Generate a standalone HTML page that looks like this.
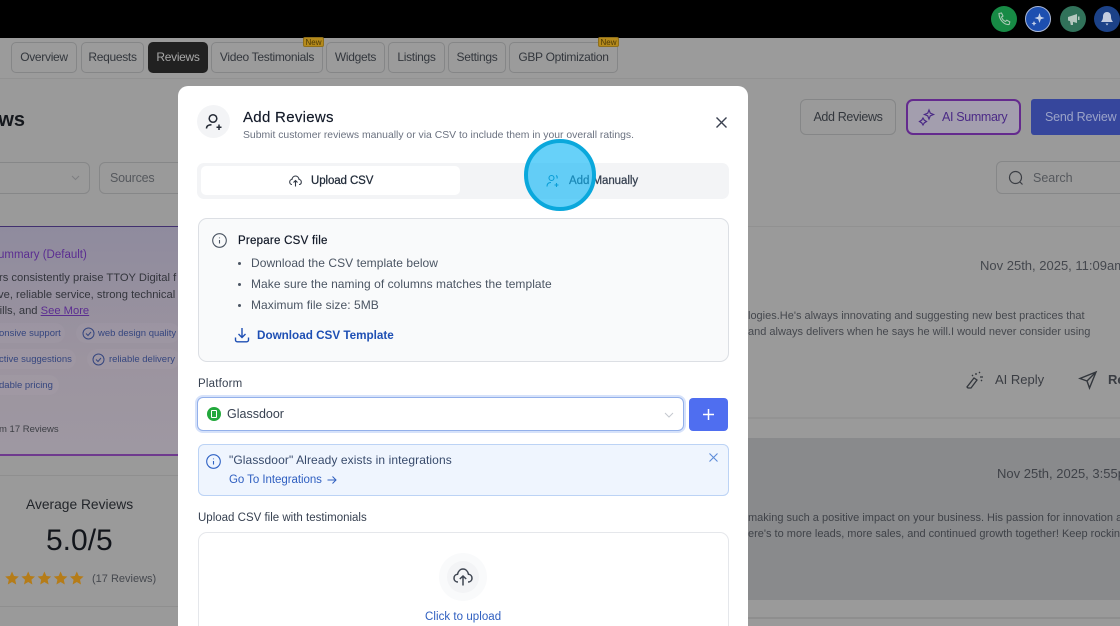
<!DOCTYPE html>
<html><head><meta charset="utf-8">
<style>
html,body{margin:0;padding:0;width:1120px;height:626px;overflow:hidden;background:#9a9a9a}
body{font-family:"Liberation Sans",sans-serif}
#p{position:absolute;left:0;top:0;width:1120px;height:626px;overflow:hidden;background:#9a9a9a;filter:blur(.35px)}
.a{position:absolute;white-space:nowrap;box-sizing:border-box}
.t{position:absolute;white-space:nowrap;line-height:18px}
.tab{position:absolute;top:42px;height:31px;border:1px solid #858687;border-radius:5px;font-size:12px;letter-spacing:-.3px;line-height:29px;text-align:center;color:#33373d;box-sizing:border-box}
.new{position:absolute;top:37px;height:10px;width:21px;background:#b58a1b;border:1px solid #8f6f1a;border-radius:2px;font-size:8px;line-height:9px;text-align:center;color:#4b3a08;box-sizing:border-box}
.chip{color:#35467f;font-size:9.5px}
.pill{position:absolute;height:20px;border-radius:10px;background:rgba(255,255,255,.03)}
.m{color:#4b5563;font-size:12px;letter-spacing:.05px}
svg{position:absolute;overflow:visible}
</style></head><body>
<div id="p">
<div class="a" style="left:0;top:0;width:1120px;height:38px;background:#000"></div>
<div class="a" style="left:0;top:38px;width:1120px;height:41px;background:#9b9b9b;border-bottom:1px solid #929292"></div>

<!-- top icons -->
<div class="a" style="left:991px;top:6px;width:26px;height:26px;border-radius:50%;background:#178a45"></div>
<svg style="left:998px;top:12px" width="13" height="14" viewBox="0 0 13 14" fill="none" stroke="#a9c9b5" stroke-width="1.1"><path d="M1 1.500l2.500-.5 1.500 3-1.500 1c.6 2 2 3.600 4 4.500l1.300-1.300 3 1.700-.7 2.600C6.500 13 1 8 1 1.500z"/></svg>
<div class="a" style="left:1025px;top:6px;width:26px;height:26px;border-radius:50%;background:#1d4fb0;border:1px solid #aab8d8"></div>
<svg style="left:1031px;top:12px" width="14" height="14" viewBox="0 0 14 14" fill="#c5d2ea"><path d="M8.500 1l1.300 3.700L13.500 6 9.800 7.300 8.500 11 7.200 7.300 3.500 6l3.700-1.300z"/><path d="M3 9l.8 1.700 1.700.8-1.700.8L3 14l-.8-1.700L.5 11.500l1.700-.8z"/></svg>
<div class="a" style="left:1060px;top:6px;width:26px;height:26px;border-radius:50%;background:#31725a"></div>
<svg style="left:1067px;top:13px" width="13" height="13" viewBox="0 0 13 13" fill="#b5c7bf"><path d="M1 4l9-3v9L1 7.500z"/><path d="M3 8h3v4H3.800z"/><rect x="11" y="3.500" width="1.500" height="3.500"/></svg>
<div class="a" style="left:1094px;top:6px;width:26px;height:26px;border-radius:50%;background:#1c4288"></div>
<svg style="left:1100px;top:11px" width="14" height="16" viewBox="0 0 14 16" fill="#c4cde0"><path d="M7 1c2.800 0 4 2.200 4 4.500 0 3 1 4 2 5.500H1c1-1.500 2-2.500 2-5.500C3 3.200 4.200 1 7 1z"/><path d="M5.500 12.500h3L7 14.500z"/></svg>

<!-- tabs -->
<div class="tab" style="left:11px;width:66px">Overview</div>
<div class="tab" style="left:81px;width:63px">Requests</div>
<div class="tab" style="left:148px;width:60px;background:#212121;border-color:#212121;color:#a8a8a8">Reviews</div>
<div class="tab" style="left:211px;width:112px">Video Testimonials</div>
<div class="tab" style="left:326px;width:59px">Widgets</div>
<div class="tab" style="left:388px;width:57px">Listings</div>
<div class="tab" style="left:448px;width:58px">Settings</div>
<div class="tab" style="left:509px;width:109px">GBP Optimization</div>
<div class="new" style="left:303px">New</div>
<div class="new" style="left:598px">New</div>

<!-- left background -->
<div class="t" style="left:-55px;top:109px;font-size:20px;line-height:22px;font-weight:700;color:#15181d">Reviews</div>
<div class="a" style="left:-20px;top:162px;width:110px;height:32px;border:1px solid #868788;border-radius:6px"></div>
<svg style="left:71px;top:175px" width="9" height="6" fill="none" stroke="#7d7e80"><path d="M1 1l3.500 3.500L8 1"/></svg>
<div class="a" style="left:99px;top:162px;width:100px;height:32px;border:1px solid #868788;border-radius:6px"></div>
<div class="t" style="left:110px;top:169px;font-size:12.500px;letter-spacing:-.2px;color:#55585d">Sources</div>

<div class="a" style="left:0;top:226px;width:180px;height:230px;background:linear-gradient(180deg,#8f8b9e,#9c949f 60%,#9e98a2);border-top:1px solid #41306f;border-bottom:2px solid #6f3a8e"></div>
<div class="t" style="left:-2px;top:246px;font-size:11.500px;color:#5b2d91">ummary (Default)</div>
<div class="t" style="left:-1px;top:269px;font-size:11.200px;color:#33353c">rs consistently praise TTOY Digital f</div>
<div class="t" style="left:-2px;top:286px;font-size:11.200px;color:#33353c">ve, reliable service, strong technical a</div>
<div class="t" style="left:-6px;top:302px;font-size:11.200px;color:#33353c">cills, and <span style="color:#5b2d91;text-decoration:underline">See More</span></div>
<div class="pill" style="left:-10px;top:323px;width:75px"></div>
<div class="pill" style="left:76px;top:323px;width:104px"></div>
<div class="pill" style="left:-10px;top:349px;width:86px"></div>
<div class="pill" style="left:87px;top:349px;width:93px"></div>
<div class="pill" style="left:-10px;top:375px;width:69px"></div>
<div class="t chip" style="left:-1px;top:325px">onsive support</div>
<svg style="left:82px;top:327px" width="13" height="13" fill="none" stroke="#35467f" stroke-width="1"><circle cx="6.500" cy="6.500" r="5.500"/><path d="M4 6.500l2 2 3-3.500"/></svg>
<div class="t chip" style="left:98px;top:325px">web design quality</div>
<div class="t chip" style="left:-1px;top:351px">ctive suggestions</div>
<svg style="left:92px;top:353px" width="13" height="13" fill="none" stroke="#35467f" stroke-width="1"><circle cx="6.500" cy="6.500" r="5.500"/><path d="M4 6.500l2 2 3-3.500"/></svg>
<div class="t chip" style="left:109px;top:351px">reliable delivery</div>
<div class="t chip" style="left:-1px;top:377px">dable pricing</div>
<div class="t" style="left:-1px;top:421px;font-size:9.500px;color:#3d3f45">m 17 Reviews</div>
<div class="a" style="left:0;top:475px;width:180px;height:1px;background:#8f8f8f"></div>
<div class="t" style="left:26px;top:496px;font-size:13.800px;color:#22252a">Average Reviews</div>
<div class="t" style="left:46px;top:526px;font-size:30px;line-height:30px;color:#12151b">5.0/5</div>
<svg style="left:5px;top:571px" width="80" height="15" viewBox="0 0 80 15" fill="#b57c18"><path d="M7 .5l2 4.500 4.800.5-3.600 3.200 1 4.800L7 11l-4.200 2.500 1-4.800L.2 5.500 5 5z"/><path transform="translate(16.200 0)" d="M7 .5l2 4.500 4.800.5-3.600 3.200 1 4.800L7 11l-4.200 2.500 1-4.800L.2 5.500 5 5z"/><path transform="translate(32.400 0)" d="M7 .5l2 4.500 4.800.5-3.600 3.200 1 4.800L7 11l-4.200 2.500 1-4.800L.2 5.500 5 5z"/><path transform="translate(48.600 0)" d="M7 .5l2 4.500 4.800.5-3.600 3.200 1 4.800L7 11l-4.200 2.500 1-4.800L.2 5.500 5 5z"/><path transform="translate(64.800 0)" d="M7 .5l2 4.500 4.800.5-3.600 3.200 1 4.800L7 11l-4.200 2.500 1-4.800L.2 5.500 5 5z"/></svg>
<div class="t" style="left:92px;top:570px;font-size:11px;color:#45484e">(17 Reviews)</div>
<div class="a" style="left:0;top:606px;width:180px;height:1px;background:#8f8f8f"></div>

<!-- right background -->
<div class="a" style="left:800px;top:99px;width:96px;height:36px;border:1px solid #858687;border-radius:6px;font-size:12.500px;letter-spacing:-.35px;line-height:34px;text-align:center;color:#33373d">Add Reviews</div>
<div class="a" style="left:906px;top:99px;width:115px;height:36px;border:2px solid #642a8e;border-radius:7px;background:#a39eae"></div>
<svg style="left:919px;top:109px" width="16" height="16" viewBox="0 0 16 16" fill="none" stroke="#4b2a86" stroke-width="1.200"><path d="M10 1l1.300 3.200 3.200 1.300-3.200 1.300L10 10 8.700 6.800 5.500 5.500l3.200-1.300z"/><path d="M4 9l1.300 2.200L7.500 12.500 5.300 13.800 4 16l-1.300-2.200L.5 12.500l2.200-1.300z"/></svg>
<div class="t" style="left:942px;top:108px;font-size:12.500px;letter-spacing:-.35px;color:#4b2a86">AI Summary</div>
<div class="a" style="left:1031px;top:99px;width:100px;height:36px;background:#36469c;border-radius:3px"></div>
<div class="t" style="left:1045px;top:108px;font-size:12.500px;letter-spacing:-.2px;color:#9ba3c8">Send Review R</div>
<div class="a" style="left:996px;top:161px;width:140px;height:33px;border:1px solid #868788;border-radius:6px"></div>
<svg style="left:1008px;top:170px" width="16" height="16" fill="none" stroke="#3b3e44" stroke-width="1.200"><circle cx="7.500" cy="7.500" r="6"/><path d="M12 12l2.500 2.500"/></svg>
<div class="t" style="left:1033px;top:169px;font-size:12.500px;color:#55585d">Search</div>

<div class="a" style="left:748px;top:226px;width:372px;height:1px;background:#919191"></div>
<div class="t" style="left:980px;top:257px;font-size:13px;color:#45484e">Nov 25th, 2025, 11:09am</div>
<div class="t" style="left:748px;top:307px;font-size:11px;color:#45484e">logies.He's always innovating and suggesting new best practices that</div>
<div class="t" style="left:748px;top:323px;font-size:11px;color:#45484e">and always delivers when he says he will.I would never consider using</div>
<svg style="left:966px;top:371px" width="20" height="19" viewBox="0 0 20 19" fill="none" stroke="#33373d" stroke-width="1.300"><path d="M2 17l-1-1 7-9 3 2-6 8z"/><path d="M10 2v2M6 4l1 1M14 6h3M13 2l1-1M15 9l1 1"/></svg>
<div class="t" style="left:995px;top:371px;font-size:13px;color:#3a3d43">AI Reply</div>
<svg style="left:1079px;top:371px" width="18" height="18" viewBox="0 0 18 18" fill="none" stroke="#33373d" stroke-width="1.400"><path d="M17 1L1 7.500l7 2.500 2.500 7zM8 10l9-9"/></svg>
<div class="t" style="left:1108px;top:371px;font-size:13px;color:#3a3d43;font-weight:700">Re</div>
<div class="a" style="left:748px;top:417px;width:372px;height:2px;background:#939393"></div>
<div class="a" style="left:748px;top:438px;width:372px;height:162px;background:#898a8c"></div>
<div class="t" style="left:997px;top:465px;font-size:13px;color:#3f4248">Nov 25th, 2025, 3:55pm</div>
<div class="t" style="left:748px;top:509px;font-size:11px;color:#3f4248">making such a positive impact on your business. His passion for innovation a</div>
<div class="t" style="left:748px;top:525px;font-size:11px;color:#3f4248">ere's to more leads, more sales, and continued growth together! Keep rockin</div>
<div class="a" style="left:748px;top:617px;width:372px;height:2px;background:#8e8e8e"></div>

<!-- modal -->
<div class="a" style="left:178px;top:86px;width:570px;height:560px;background:#fff;border-radius:10px"></div>
<div class="a" style="left:197px;top:105px;width:33px;height:33px;border-radius:50%;background:#f3f4f6"></div>
<svg style="left:205px;top:113px" width="18" height="18" viewBox="0 0 18 18" fill="none" stroke="#252b36" stroke-width="1.500"><circle cx="8" cy="5.500" r="3.800"/><path d="M1.500 15.500c0-2.500 2-3.800 5-3.800M14 11.500v5.500M11.500 14.200h5"/></svg>
<div class="t" style="left:243px;top:109px;font-size:15px;color:#111827;letter-spacing:.3px;-webkit-text-stroke:.15px #111827">Add Reviews</div>
<div class="t" style="left:243px;top:127px;font-size:10.400px;color:#6b7280">Submit customer reviews manually or via CSV to include them in your overall ratings.</div>
<svg style="left:716px;top:117px" width="11" height="11" fill="none" stroke="#3a4150" stroke-width="1.400"><path d="M.5.500l10 10M10.500.500l-10 10"/></svg>

<div class="a" style="left:197px;top:163px;width:532px;height:36px;background:#f3f4f6;border-radius:7px"></div>
<div class="a" style="left:201px;top:166px;width:259px;height:29px;background:#fff;border-radius:5px"></div>
<svg style="left:289px;top:175px" width="13" height="12" viewBox="0 0 13 12" fill="none" stroke="#333a46" stroke-width="1.100"><path d="M3 9.500C1.500 9.500.7 8.500.7 7c0-1.400 1-2.400 2.200-2.500C3.300 2.500 4.700 1 6.500 1s3.200 1.500 3.600 3.500C11.300 4.600 12.300 5.600 12.300 7c0 1.500-.8 2.500-2.300 2.500M6.500 11.500V5.500M4.500 7.500l2-2 2 2"/></svg>
<div class="t" style="left:311px;top:172px;font-size:11.500px;color:#1f2937;letter-spacing:-.1px;-webkit-text-stroke:.25px #1f2937">Upload CSV</div>
<svg style="left:546px;top:174px" width="14" height="14" viewBox="0 0 14 14" fill="none" stroke="#0d7aa6" stroke-width="1.100"><circle cx="5.500" cy="4" r="2.500"/><path d="M1 12.500c0-2.500 1.500-4 4-4M10 1.500c1 .5 1.500 1.500 1 3M10.500 9v4M8.500 11h4"/></svg>
<div class="t" style="left:569px;top:172px;font-size:11.500px;color:#374151;letter-spacing:-.05px;-webkit-text-stroke:.25px #374151">Add Manually</div>

<div class="a" style="left:198px;top:218px;width:531px;height:144px;background:#f9fafb;border:1px solid #dcdfe4;border-radius:9px"></div>
<svg style="left:212px;top:233px" width="15" height="15" fill="none" stroke="#4b5563" stroke-width="1.100"><circle cx="7.500" cy="7.500" r="6.800"/><path d="M7.500 7v3.500M7.500 4.500v.8"/></svg>
<div class="t" style="left:238px;top:232px;font-size:11.500px;color:#111827;letter-spacing:.25px;-webkit-text-stroke:.2px #111827">Prepare CSV file</div>
<div class="a" style="left:238px;top:262px;width:3px;height:3px;border-radius:50%;background:#4b5563"></div>
<div class="t m" style="left:251px;top:254px">Download the CSV template below</div>
<div class="a" style="left:238px;top:283px;width:3px;height:3px;border-radius:50%;background:#4b5563"></div>
<div class="t m" style="left:251px;top:275px">Make sure the naming of columns matches the template</div>
<div class="a" style="left:238px;top:304px;width:3px;height:3px;border-radius:50%;background:#4b5563"></div>
<div class="t m" style="left:251px;top:296px">Maximum file size: 5MB</div>
<svg style="left:234px;top:327px" width="16" height="16" viewBox="0 0 16 16" fill="none" stroke="#1e4fb4" stroke-width="1.400"><path d="M8 1v9M4.500 7L8 10.500 11.500 7M1.500 10.500v2.500c0 1 .8 1.800 1.800 1.800h9.400c1 0 1.800-.8 1.800-1.800v-2.500"/></svg>
<div class="t" style="left:257px;top:327px;font-size:11.700px;font-weight:700;color:#1e4fb4">Download CSV Template</div>

<div class="t" style="left:198px;top:375px;font-size:11.500px;color:#374151;letter-spacing:.2px">Platform</div>
<div class="a" style="left:197px;top:397px;width:487px;height:34px;background:#fff;border:1px solid #93b0ea;border-radius:6px;box-shadow:0 0 0 2px #d6e2fa"></div>
<div class="a" style="left:207px;top:407px;width:14px;height:14px;border-radius:50%;background:#22a83c"></div>
<div class="a" style="left:211px;top:410px;width:6px;height:8px;border:1.500px solid #fff;border-radius:1px"></div>
<div class="t" style="left:227px;top:405px;font-size:12.500px;color:#374151">Glassdoor</div>
<svg style="left:664px;top:412px" width="10" height="6" fill="none" stroke="#c4c8cf"><path d="M1 1l4 4 4-4"/></svg>
<div class="a" style="left:689px;top:398px;width:39px;height:33px;background:#4f6ef0;border-radius:4px"></div>
<svg style="left:703px;top:409px" width="11" height="11" fill="none" stroke="#fff" stroke-width="1.500"><path d="M5.500 0v11M0 5.500h11"/></svg>

<div class="a" style="left:198px;top:444px;width:531px;height:52px;background:#eff5fe;border:1px solid #bcd3f5;border-radius:6px"></div>
<svg style="left:206px;top:454px" width="15" height="15" fill="none" stroke="#2f62c4" stroke-width="1.100"><circle cx="7.500" cy="7.500" r="6.800"/><path d="M7.500 7v3.500M7.500 4.500v.8"/></svg>
<div class="t" style="left:229px;top:451px;font-size:12px;color:#374a6b;letter-spacing:.1px">"Glassdoor" Already exists in integrations</div>
<div class="t" style="left:229px;top:471px;font-size:11.500px;color:#2f5fc0;letter-spacing:-.05px">Go To Integrations</div>
<svg style="left:327px;top:475px" width="10" height="10" fill="none" stroke="#2f5fc0" stroke-width="1"><path d="M.5 5h8.500M5.500 1.500L9 5 5.500 8.500"/></svg>
<svg style="left:709px;top:453px" width="9" height="9" fill="none" stroke="#5b8bd8" stroke-width="1.100"><path d="M.5.500l8 8M8.500.500l-8 8"/></svg>

<div class="t" style="left:198px;top:509px;font-size:11.500px;color:#374151">Upload CSV file with testimonials</div>
<div class="a" style="left:198px;top:532px;width:531px;height:120px;background:#fff;border:1px solid #e5e7eb;border-radius:9px"></div>
<div class="a" style="left:439px;top:553px;width:48px;height:48px;border-radius:50%;background:#f9fafb"></div>
<div class="a" style="left:447px;top:561px;width:32px;height:32px;border-radius:50%;background:#f3f4f6"></div>
<svg style="left:453px;top:568px" width="20" height="18" viewBox="0 0 20 18" fill="none" stroke="#3f4652" stroke-width="1.500"><path d="M5 14C2.500 14 1 12.300 1 10.200 1 8 2.500 6.500 4.500 6.300 5.200 3.200 7.300 1 10 1s4.800 2.200 5.500 5.300C17.500 6.500 19 8 19 10.200 19 12.300 17.500 14 15 14M10 17.500V8M6.800 11L10 8l3.200 3"/></svg>
<div class="t" style="left:425px;top:608px;font-size:11.500px;color:#2f5fc0;letter-spacing:.05px">Click to upload</div>

<!-- highlight circle -->
<div class="a" style="left:524px;top:139px;width:72px;height:72px;border-radius:50%;background:rgba(10,180,245,.62);border:4px solid #0aa8dc"></div>
</div>
</body></html>
